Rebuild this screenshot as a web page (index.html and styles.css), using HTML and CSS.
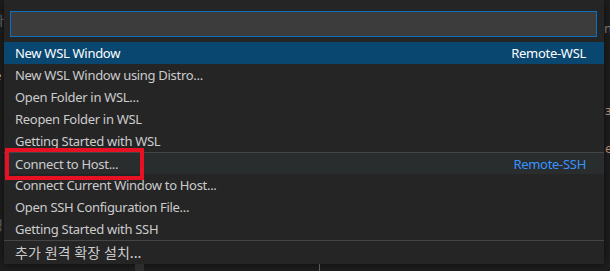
FILE: index.html
```html
<!DOCTYPE html>
<html lang="ko">
<head>
    <meta charset="UTF-8">
    <title>Quick Pick</title>
    <link rel="stylesheet" href="styles.css">
</head>
<body>
    <div class="editor">
        <!-- bits of the editor behind the picker -->
        <span class="peek peek-l1">파</span>
        <span class="peek peek-l2">e</span>
        <span class="peek peek-l3">+</span>
        <span class="peek peek-l4">영</span>
        <span class="peek peek-r1">n</span>
        <span class="peek peek-r2">ɜ</span>
        <span class="peek peek-r3">e</span>

        <div class="quick-pick">
            <div class="input-box"><input type="text" class="input"></div>
            <ul class="list">
                <li class="item selected"><span class="label">New WSL Window</span><span class="detail">Remote-WSL</span></li>
                <li class="item"><span class="label">New WSL Window using Distro...</span></li>
                <li class="item"><span class="label">Open Folder in WSL...</span></li>
                <li class="item"><span class="label">Reopen Folder in WSL</span></li>
                <li class="item"><span class="label">Getting Started with WSL</span></li>
                <li class="item separator hover">
                    <span class="label">Connect to Host...</span>
                    <span class="detail link">Remote-SSH</span>
                    <span class="highlight-box"></span>
                </li>
                <li class="item"><span class="label">Connect Current Window to Host...</span></li>
                <li class="item"><span class="label">Open SSH Configuration File...</span></li>
                <li class="item"><span class="label">Getting Started with SSH</span></li>
                <li class="item separator"><span class="label korean">추가 원격 확장 설치...</span></li>
            </ul>
        </div>

        <div class="below">
            <span class="tab-stub"></span>
            <span class="ruler"></span>
        </div>
    </div>
</body>
</html>
```

FILE: styles.css
```css
* {
    margin: 0;
    padding: 0;
    box-sizing: border-box;
}

body {
    background: #1e1e1e;
    font-family: 'Segoe UI', 'Noto Sans', 'Noto Sans CJK KR', sans-serif;
    font-size: 13px;
    letter-spacing: -0.3px;
    color: #cccccc;
    width: 610px;
    height: 271px;
    overflow: hidden;
}

.editor {
    position: relative;
    width: 610px;
    height: 271px;
    padding-left: 4px;
}

.peek {
    position: absolute;
    font-size: 13px;
    line-height: 16px;
}

.peek-l1 { left: -8px; top: 12px; color: #6a6a6a; }
.peek-l2 { left: -6px; top: 67px; color: #d4d4d4; }
.peek-l3 { left: -7px; top: 120px; color: #9a9a9a; }
.peek-l4 { left: -9px; top: 217px; color: #6a6a6a; }
.peek-r1 { left: 604px; top: 20px; color: #8a8a8a; }
.peek-r2 { left: 605px; top: 102px; color: #ce9178; }
.peek-r3 { left: 605px; top: 140px; color: #ce9178; }

.quick-pick {
    position: relative;
    width: 600px;
    height: 264px;
    background: #252526;
    box-shadow: 0 0 8px rgba(0, 0, 0, 0.6);
    padding-top: 11px;
}

.input-box {
    margin: 0 7px 0 6px;
    height: 26px;
    border: 1px solid #0e70c0;
    background: #3c3c3c;
}

.input {
    width: 100%;
    height: 100%;
    border: none;
    background: transparent;
    outline: none;
}

.list {
    list-style: none;
    margin-top: 5px;
}

.item {
    position: relative;
    display: flex;
    justify-content: space-between;
    align-items: center;
    height: 22px;
    padding: 0 18px 0 11px;
    white-space: nowrap;
}

.item.selected {
    background: #094771;
    color: #ffffff;
}

.item.hover {
    background: #2a2d2e;
}

.item.separator {
    border-top: 1px solid #454545;
}

.label.korean {
    font-family: 'Noto Sans CJK KR', sans-serif;
    font-size: 14px;
    letter-spacing: 0;
}

.detail.link {
    color: #3794ff;
}

.highlight-box {
    position: absolute;
    left: 1px;
    top: -5px;
    width: 139px;
    height: 32px;
    border: 4px solid #e81123;
}

.below {
    position: relative;
    height: 7px;
}

.tab-stub {
    position: absolute;
    left: 131px;
    top: 0;
    width: 9px;
    height: 7px;
    background: #2d2d2d;
}

.ruler {
    position: absolute;
    left: 315px;
    top: 0;
    width: 1px;
    height: 7px;
    background: #5a5a5a;
}
```
